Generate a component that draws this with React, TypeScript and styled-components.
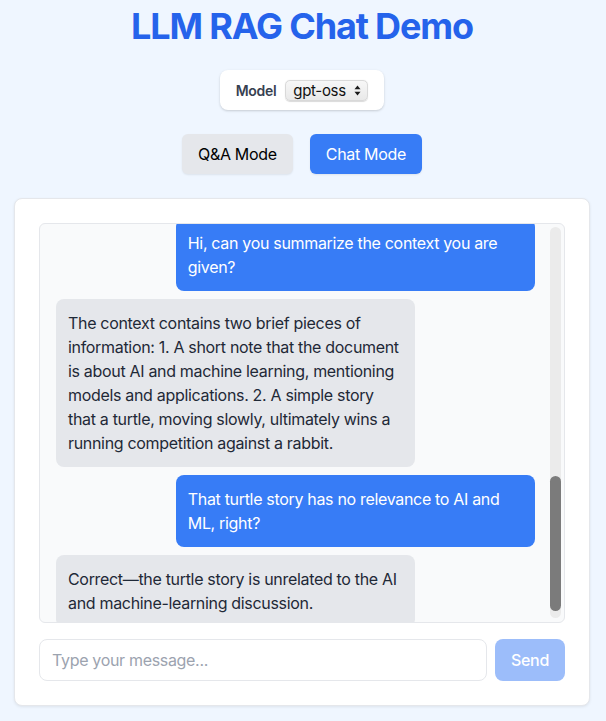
import React, { useLayoutEffect, useRef, useState } from "react";
import styled, { createGlobalStyle } from "styled-components";

const GlobalStyle = createGlobalStyle`
  * { box-sizing: border-box; }
  html, body { margin: 0; padding: 0; }
  body {
    background: #eff6ff;
    font-family: Inter, "Noto Sans", "Liberation Sans", sans-serif;
    letter-spacing: -0.02em;
    color: #111827;
  }
  button, input, select { letter-spacing: inherit; }
`;

const Page = styled.div`
  display: flex;
  flex-direction: column;
  align-items: center;
  padding: 6px 16px 16px 14px;
`;

const Title = styled.h1`
  margin: 0 0 24px;
  font-size: 36px;
  line-height: 40px;
  font-weight: 700;
  letter-spacing: -0.032em;
  color: #2563eb;
  text-align: center;
`;

const ModelBox = styled.div`
  display: flex;
  align-items: center;
  gap: 9px;
  height: 40px;
  padding: 0 16px;
  background: #ffffff;
  border-radius: 8px;
  box-shadow: 0 1px 3px rgba(0, 0, 0, 0.12), 0 1px 2px rgba(0, 0, 0, 0.06);
  margin-bottom: 24px;
`;

const ModelLabel = styled.label`
  font-size: 14px;
  font-weight: 600;
  color: #374151;
`;

const SelectWrap = styled.span`
  position: relative;
  display: inline-flex;
`;

const Select = styled.select`
  appearance: none;
  -webkit-appearance: none;
  height: 21px;
  width: 83px;
  padding: 0 20px 0 7px;
  font-family: inherit;
  font-size: 15px;
  color: #111;
  border: 1px solid #d9d9d9;
  border-radius: 5px;
  background: linear-gradient(#f7f7f7, #e9e9e9);
  box-shadow: 0 0.5px 1px rgba(0, 0, 0, 0.15);
  outline: none;
`;

const SelectArrows = styled.svg`
  position: absolute;
  right: 7px;
  top: 5px;
  pointer-events: none;
`;

const ModeRow = styled.div`
  display: flex;
  gap: 17px;
  margin-bottom: 24px;
`;

const ModeButton = styled.button<{ $active: boolean }>`
  height: 40px;
  padding: 0 16px;
  border: none;
  border-radius: 6px;
  font-family: inherit;
  font-size: 16px;
  cursor: pointer;
  background: ${(p) => (p.$active ? "#377cf6" : "#e5e7eb")};
  color: ${(p) => (p.$active ? "#ffffff" : "#000000")};
  box-shadow: 0 1px 2px rgba(0, 0, 0, 0.08);
`;

const Card = styled.div`
  width: 576px;
  background: #ffffff;
  border: 1px solid #e5e7eb;
  border-radius: 8px;
  box-shadow: 0 1px 3px rgba(0, 0, 0, 0.08);
  padding: 24px;
  display: flex;
  flex-direction: column;
  gap: 16px;
`;

const ChatFrame = styled.div`
  position: relative;
  height: 400px;
  background: #f9fafb;
  border: 1px solid #e5e7eb;
  border-radius: 6px;
  overflow: hidden;
`;

const Messages = styled.div`
  height: 100%;
  overflow-y: scroll;
  scrollbar-width: none;
  padding: 16px 29px 16px 16px;
  display: flex;
  flex-direction: column;
  gap: 8px;
  &::-webkit-scrollbar {
    display: none;
  }
`;

const ScrollTrack = styled.div`
  position: absolute;
  top: 3px;
  bottom: 4px;
  right: 3px;
  width: 11px;
  border-radius: 6px;
  background: #ebebeb;
`;

const ScrollThumb = styled.div`
  position: absolute;
  left: 0;
  right: 0;
  border-radius: 6px;
  background: #7b7b7b;
`;

const Bubble = styled.div<{ $user: boolean }>`
  flex: none;
  max-width: 75%;
  align-self: ${(p) => (p.$user ? "flex-end" : "flex-start")};
  padding: 12px;
  border-radius: 8px;
  font-size: 16px;
  line-height: 24px;
  background: ${(p) => (p.$user ? "#377cf6" : "#e5e7eb")};
  color: ${(p) => (p.$user ? "#ffffff" : "#1f2937")};
`;

const InputRow = styled.form`
  display: flex;
  gap: 8px;
`;

const Input = styled.input`
  flex: 1;
  height: 42px;
  padding: 8px 12px;
  font-family: inherit;
  font-size: 16px;
  border: 1px solid #e5e7eb;
  border-radius: 8px;
  outline: none;
  color: #111827;
  &::placeholder {
    color: #9ca3af;
  }
`;

const SendButton = styled.button`
  height: 42px;
  padding: 0 16px;
  border: none;
  border-radius: 8px;
  background: #9cbdfa;
  color: #ffffff;
  font-family: inherit;
  font-size: 16px;
  font-weight: 500;
`;

type Msg = { role: "user" | "assistant"; text: string };

const messages: Msg[] = [
  { role: "user", text: "Hi!" },
  { role: "assistant", text: "Hello! Ask me anything about the documents you have provided." },
  { role: "user", text: "What is this document about?" },
  {
    role: "assistant",
    text:
      "The document is about AI and machine learning. It briefly mentions models and applications, but it does not go into technical detail about any specific method, dataset or product.",
  },
  { role: "user", text: "Does it mention any specific models?" },
  {
    role: "assistant",
    text:
      "No. It only refers to models in general terms. The context you provided does not name any particular model, architecture or training approach, so I can't say which ones the author had in mind.",
  },
  { role: "user", text: "Is there anything else in the context?" },
  {
    role: "assistant",
    text:
      "Yes. Besides the note on AI and machine learning, there is a short story about a turtle and a rabbit.",
  },
  { role: "user", text: "Hi, can you summarize the context you are given?" },
  {
    role: "assistant",
    text:
      "The context contains two brief pieces of information: 1. A short note that the document is about AI and machine learning, mentioning models and applications. 2. A simple story that a turtle, moving slowly, ultimately wins a running competition against a rabbit.",
  },
  { role: "user", text: "That turtle story has no relevance to AI and ML, right?" },
  {
    role: "assistant",
    text: "Correct\u2014the turtle story is unrelated to the AI and machine-learning discussion.",
  },
];

const TRACK_LEN = 391;

export default function App() {
  const [mode, setMode] = useState<"qa" | "chat">("chat");
  const [draft, setDraft] = useState("");
  const [thumb, setThumb] = useState({ top: 246, height: 136 });
  const listRef = useRef<HTMLDivElement>(null);

  const updateThumb = () => {
    const el = listRef.current;
    if (!el) return;
    const ratio = el.clientHeight / el.scrollHeight;
    const height = Math.max(24, TRACK_LEN * ratio);
    const max = el.scrollHeight - el.clientHeight;
    const top = max > 0 ? (el.scrollTop / max) * (TRACK_LEN - height) : 0;
    setThumb({ top, height });
  };

  useLayoutEffect(() => {
    const el = listRef.current;
    if (el) el.scrollTop = el.scrollHeight - el.clientHeight - 21;
    updateThumb();
  }, []);

  return (
    <>
      <GlobalStyle />
      <Page>
        <Title>LLM RAG Chat Demo</Title>
        <ModelBox>
          <ModelLabel htmlFor="model">Model</ModelLabel>
          <SelectWrap>
            <Select id="model" defaultValue="gpt-oss">
              <option value="gpt-oss">gpt-oss</option>
            </Select>
            <SelectArrows width="7" height="11" viewBox="0 0 7 11">
              <path d="M3.5 0.5 L6.5 4.3 H0.5 Z" fill="#1a1a1a" />
              <path d="M3.5 10.5 L6.5 6.7 H0.5 Z" fill="#1a1a1a" />
            </SelectArrows>
          </SelectWrap>
        </ModelBox>
        <ModeRow>
          <ModeButton $active={mode === "qa"} onClick={() => setMode("qa")}>
            Q&amp;A Mode
          </ModeButton>
          <ModeButton $active={mode === "chat"} onClick={() => setMode("chat")}>
            Chat Mode
          </ModeButton>
        </ModeRow>
        <Card>
          <ChatFrame>
            <Messages ref={listRef} onScroll={updateThumb}>
              {messages.map((m, i) => (
                <Bubble key={i} $user={m.role === "user"}>
                  {m.text}
                </Bubble>
              ))}
            </Messages>
            <ScrollTrack>
              <ScrollThumb style={{ top: thumb.top, height: thumb.height }} />
            </ScrollTrack>
          </ChatFrame>
          <InputRow onSubmit={(e) => e.preventDefault()}>
            <Input
              placeholder="Type your message..."
              value={draft}
              onChange={(e) => setDraft(e.target.value)}
            />
            <SendButton type="submit" disabled={!draft}>
              Send
            </SendButton>
          </InputRow>
        </Card>
      </Page>
    </>
  );
}
